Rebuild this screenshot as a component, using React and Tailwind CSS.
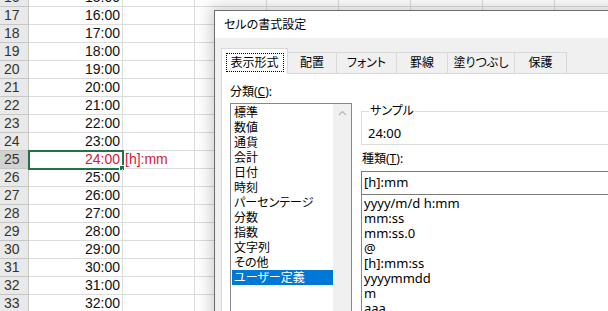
import React from "react";

// 行16〜33（A列に時刻）
const rows = Array.from({ length: 18 }, (_, i) => 16 + i);
const extraCols = [0, 1, 2, 3, 4, 5];

const categories = [
  "標準", "数値", "通貨", "会計", "日付", "時刻", "パーセンテージ",
  "分数", "指数", "文字列", "その他", "ユーザー定義",
];

const formats = [
  "yyyy/m/d h:mm", "mm:ss", "mm:ss.0", "@", "[h]:mm:ss", "yyyymmdd", "m", "aaa", "aaaa",
];

const tabs = [
  { label: "表示形式", w: "w-[67px]", active: true },
  { label: "配置", w: "w-[49px]" },
  { label: "フォント", w: "w-[60px]" },
  { label: "罫線", w: "w-[51px]" },
  { label: "塗りつぶし", w: "w-[67px]" },
  { label: "保護", w: "w-[52px]" },
];

function SheetRow({ n }) {
  const selected = n === 25;
  return (
    <div className="flex h-[18px]">
      <div
        className={`w-[29px] shrink-0 border-r border-b border-[#c6c6c6] pl-[4px] leading-[17px] text-[14px] text-[#333] ${
          selected ? "bg-[#d2d2d2]" : "bg-[#e9e9e9]"
        }`}
      >
        {n}
      </div>
      <div
        className={`relative w-[94px] shrink-0 border-r border-b border-[#dadcdd] pr-[2px] text-right leading-[17px] text-[14px] ${
          selected ? "text-[#d4173a]" : "text-[#111]"
        }`}
      >
        {n - 1}:00
        {selected && (
          <>
            <div className="pointer-events-none absolute -left-px -top-px h-[20px] w-[96px] border-2 border-[#217346]" />
            <div className="absolute left-[90px] top-[14px] h-[6px] w-[6px] border border-white bg-[#217346]" />
          </>
        )}
      </div>
      <div className="w-[72px] shrink-0 border-r border-b border-[#dadcdd] pl-[2px] leading-[17px] text-[14px] text-[#d4173a]">
        {selected ? "[h]:mm" : ""}
      </div>
      {extraCols.map((c) => (
        <div key={c} className="w-[72px] shrink-0 border-r border-b border-[#dadcdd]" />
      ))}
    </div>
  );
}

function FormatDialog() {
  return (
    <div className="absolute left-[214px] top-[10px] w-[420px] h-[320px] border border-[#6d6d6d] bg-[#f0f0f0] shadow-[0_0_14px_4px_rgba(0,0,0,0.18)] font-['Noto_Sans','Noto_Sans_CJK_JP',sans-serif] text-[#000] [font-feature-settings:'palt']">
      {/* タイトルバー */}
      <div className="flex h-[27px] items-center bg-white pl-[9px] text-[12px]">
        セルの書式設定
      </div>

      <div className="pl-[6px] pt-[10px]">
        {/* タブ */}
        <div className="flex items-end">
          {tabs.map((t) =>
            t.active ? (
              <div
                key={t.label}
                className={`${t.w} relative z-10 -mb-px flex h-[26px] shrink-0 items-start justify-center border border-b-0 border-[#d9d9d9] bg-white pt-[4px]`}
              >
                <div className="flex h-[19px] w-[58px] items-center justify-center border border-dotted border-black text-[12px] leading-[16px]">
                  {t.label}
                </div>
              </div>
            ) : (
              <div
                key={t.label}
                className={`${t.w} flex h-[21px] shrink-0 items-center justify-center border-t border-r border-[#d9d9d9] bg-[#f0f0f0] text-[12px] leading-[16px]`}
              >
                {t.label}
              </div>
            )
          )}
        </div>

        {/* タブページ */}
        <div className="flex h-[260px] items-start border border-[#d9d9d9] bg-white">
          {/* 分類 */}
          <div className="pl-[8px] pt-[10px]">
            <div className="text-[12px] leading-[16px]">
              分類(<span className="underline">C</span>):
            </div>
            <div className="mt-[3px] flex h-[220px] w-[122px] border border-[#828790]">
              <div className="w-[102px] pl-px pt-px">
                {categories.map((c) => (
                  <div
                    key={c}
                    className={`pl-[2px] text-[12px] leading-[15px] ${
                      c === "ユーザー定義" ? "bg-[#0078d7] text-white" : ""
                    }`}
                  >
                    {c}
                  </div>
                ))}
              </div>
              <div className="flex h-full w-[18px] justify-center bg-[#f0f0f0] pt-[6px]">
                <svg width="9" height="6" viewBox="0 0 9 6">
                  <path d="M1 5 L4.5 1.5 L8 5" fill="none" stroke="#b5b5b5" strokeWidth="1.2" />
                </svg>
              </div>
            </div>
          </div>

          {/* サンプル・種類 */}
          <div className="ml-[9px] w-[300px] pt-[29px]">
            <fieldset className="border border-[#dcdcdc] pb-[2px] pl-[6px]">
              <legend className="ml-[1px] px-px text-[12px] leading-[16px]">サンプル</legend>
              <div className="pt-[5px] text-[13px] leading-[18px]">24:00</div>
            </fieldset>
            <div className="mt-[6px] pl-px text-[12px] leading-[16px]">
              種類(<span className="underline">T</span>):
            </div>
            <div className="mt-[4px] flex h-[24px] items-center border border-[#7a7a7a] pl-[2px] text-[13px]">
              [h]:mm
            </div>
            <div className="h-[140px] border border-t-0 border-[#828790] pl-[2px] pt-px">
              {formats.map((f) => (
                <div key={f} className="text-[13px] leading-[15px]">
                  {f}
                </div>
              ))}
            </div>
          </div>
        </div>
      </div>
    </div>
  );
}

export default function App() {
  return (
    <div className="relative h-[311px] w-[608px] overflow-hidden bg-white font-['Liberation_Sans',Arial,sans-serif]">
      <div className="-mt-[11px]">
        {rows.map((n) => (
          <SheetRow key={n} n={n} />
        ))}
      </div>
      <FormatDialog />
    </div>
  );
}
